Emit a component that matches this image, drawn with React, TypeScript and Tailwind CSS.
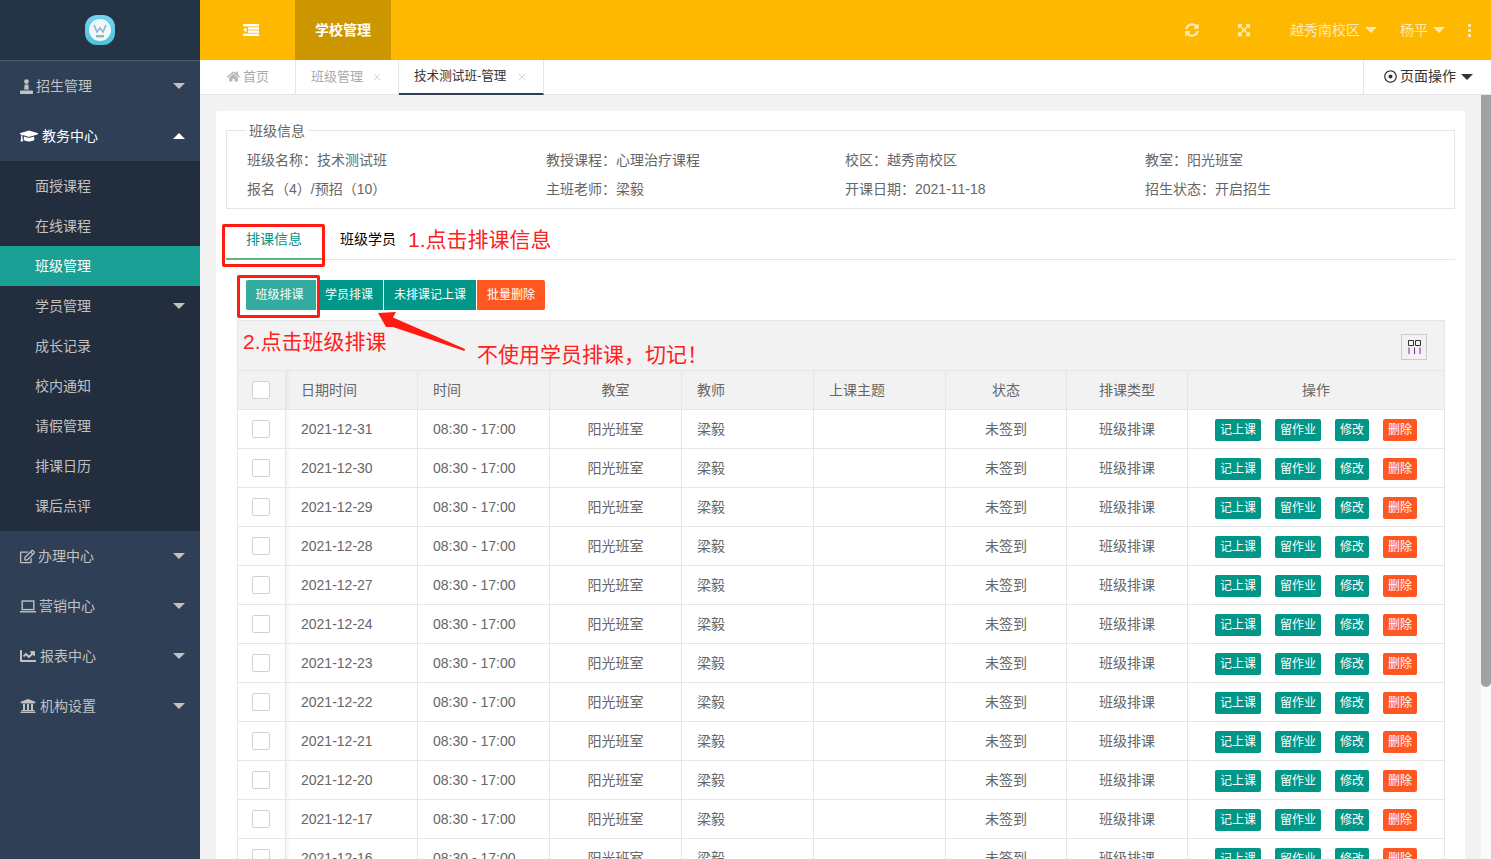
import type { ReactNode } from 'react';
import { X } from 'lucide-react';
import { FaChartLine, FaExpandArrowsAlt, FaGraduationCap, FaHome, FaRegDotCircle, FaRegEdit, FaSyncAlt, FaUniversity } from 'react-icons/fa';

const subMenu = ['面授课程', '在线课程', '班级管理', '学员管理', '成长记录', '校内通知', '请假管理', '排课日历', '课后点评'];

const dates = [
  '2021-12-31', '2021-12-30', '2021-12-29', '2021-12-28', '2021-12-27', '2021-12-24',
  '2021-12-23', '2021-12-22', '2021-12-21', '2021-12-20', '2021-12-17', '2021-12-16',
];

// full-width punctuation, as on the original page
const infoRows = [
  ['班级名称\uFF1A技术测试班', '教授课程\uFF1A心理治疗课程', '校区\uFF1A越秀南校区', '教室\uFF1A阳光班室'],
  ['报名\uFF084\uFF09/预招\uFF0810\uFF09', '主班老师\uFF1A梁毅', '开课日期\uFF1A2021-11-18', '招生状态\uFF1A开启招生'],
];

function Caret({ up, className }: { up?: boolean; className: string }) {
  return (
    <span
      className={`h-0 w-0 border-x-[6px] border-x-transparent ${up ? 'border-b-[6px]' : 'border-t-[6px]'} ${className}`}
    />
  );
}

function MenuItem({ icon, iconWidth, label, open }: { icon: ReactNode; iconWidth: string; label: string; open?: boolean }) {
  return (
    <div className={`flex h-[50px] items-center pl-[20px] pr-[15px] text-[14px] ${open ? 'text-white' : 'text-[#c2c2c2]'}`}>
      <span className={`flex items-center ${iconWidth}`}>{icon}</span>
      <span>{label}</span>
      <Caret up={open} className={`ml-auto ${open ? 'border-b-white' : 'border-t-[#c2c2c2]'}`} />
    </div>
  );
}

function Logo() {
  return (
    <svg width="30" height="30" viewBox="0 0 30 30">
      <defs>
        <linearGradient id="logoFill" x1="0" y1="0" x2="0" y2="1">
          <stop offset="0" stopColor="#74d2f0" />
          <stop offset="1" stopColor="#4cc4d6" />
        </linearGradient>
      </defs>
      <rect width="30" height="30" rx="12" fill="url(#logoFill)" />
      <circle cx="15" cy="15" r="11" fill="#eef7fa" />
      <path d="M9 10l3 7 3-4 3 4 3-7" fill="none" stroke="#8fb3c9" strokeWidth="1.6" />
      <rect x="11" y="20" width="8" height="2.4" fill="#a3afb8" />
    </svg>
  );
}

function StampIcon() {
  return (
    <svg width="13" height="15" viewBox="0 0 13 15" fill="currentColor">
      <circle cx="6.5" cy="2.6" r="2.4" />
      <path d="M4.6 5.4h3.8l.4 5H4.2z" />
      <path d="M1 11.4h11c.6 0 1 .5 1 1.1v1.4c0 .6-.4 1.1-1 1.1H1c-.6 0-1-.5-1-1.1v-1.4c0-.6.4-1.1 1-1.1z" />
    </svg>
  );
}

function LaptopIcon() {
  return (
    <svg width="16" height="13" viewBox="0 0 16 13" fill="none" stroke="currentColor" strokeWidth="1.4">
      <rect x="2.2" y="1" width="11.6" height="8.6" />
      <path d="M0 11.8h16" />
    </svg>
  );
}

function PageTab({ label, width, active, first }: { label: string; width: string; active?: boolean; first?: boolean }) {
  return (
    <div
      className={`flex h-[35px] items-center border-r border-[#e6e6e6] ${width} ${first ? 'pl-[27px]' : 'pl-[15px]'} ${active ? 'border-b-2 border-b-[#2f4056] text-[12.6px] text-[#333]' : 'pb-[2px] text-[13px] text-[#aaa]'}`}
    >
      {first && <FaHome className="mr-[3px] text-[13px] text-[#b5b5b5]" />}
      <span>{label}</span>
      {!first && <X size={12} strokeWidth={1.3} className={`text-[#bbb] ${active ? 'ml-[10px]' : 'ml-[8px]'}`} />}
    </div>
  );
}

function OpButton({ label, danger, wide }: { label: string; danger?: boolean; wide?: boolean }) {
  return (
    <span
      className={`flex h-[22px] items-center justify-center rounded-[2px] text-[12px] text-white ${wide ? 'w-[46px]' : 'w-[34px]'} ${danger ? 'bg-[#ff5722]' : 'bg-[#009688]'}`}
    >
      {label}
    </span>
  );
}

function CheckBox() {
  return <span className="block h-[18px] w-[18px] rounded-[2px] border border-[#d2d2d2] bg-white" />;
}

const cell = 'border border-[#e6e6e6] px-[15px] font-normal';
const checkCell = 'border border-[#e6e6e6] pl-[14px] font-normal';
const shadedCell = 'shadow-[inset_4px_0_4px_-3px_rgba(0,0,0,0.07)]';

export default function App() {
  return (
    <div className="relative flex h-screen overflow-hidden bg-[#f2f2f2] font-['Liberation_Sans','Noto_Sans_CJK_SC',sans-serif] text-[14px] text-[#666]">
      {/* Sidebar */}
      <aside className="w-[200px] shrink-0 bg-[#2f3f55]">
        <div className="flex h-[61px] items-center justify-center border-b border-[#4a5868] bg-[#243346] pb-[1px]">
          <Logo />
        </div>
        <MenuItem icon={<StampIcon />} iconWidth="w-[16px]" label="招生管理" />
        <MenuItem icon={<FaGraduationCap className="text-[18px]" />} iconWidth="w-[22px]" label="教务中心" open />
        <div className="bg-[#222d3d] py-[5px]">
          {subMenu.map((name) => (
            <div
              key={name}
              className={`flex h-[40px] items-center pl-[35px] pr-[15px] ${name === '班级管理' ? 'bg-[#1aa094] text-white' : 'text-[#c2c2c2]'}`}
            >
              {name}
              {name === '学员管理' && <Caret className="ml-auto border-t-[#c2c2c2]" />}
            </div>
          ))}
        </div>
        <MenuItem icon={<FaRegEdit className="text-[15px]" />} iconWidth="w-[18px]" label="办理中心" />
        <MenuItem icon={<LaptopIcon />} iconWidth="w-[19px]" label="营销中心" />
        <MenuItem icon={<FaChartLine className="text-[16px]" />} iconWidth="w-[20px]" label="报表中心" />
        <MenuItem icon={<FaUniversity className="text-[16px]" />} iconWidth="w-[20px]" label="机构设置" />
      </aside>

      <div className="flex min-w-0 flex-1 flex-col">
        {/* Top bar */}
        <header className="flex h-[60px] shrink-0 items-center bg-[#ffb800] text-[#ffe9b3]">
          <div className="flex w-[95px] justify-center pl-[7px]">
            <svg width="16" height="12" viewBox="0 0 16 12" fill="#fff">
              <rect x="0" y="0" width="16" height="2.4" />
              <rect x="5" y="3.2" width="11" height="2.4" />
              <rect x="5" y="6.4" width="11" height="2.4" />
              <rect x="0" y="9.6" width="16" height="2.4" />
              <path d="M0 6l3.5-2.6v5.2z" />
            </svg>
          </div>
          <div className="flex h-full w-[96px] items-center justify-center bg-[#cc9600] font-bold text-white">学校管理</div>
          <div className="ml-auto flex items-center pr-[20px]">
            <FaSyncAlt className="mr-[38px] text-[14px]" />
            <FaExpandArrowsAlt className="mr-[39px] text-[14px]" />
            <span>越秀南校区</span>
            <Caret className="ml-[5px] mr-[23px] border-t-[#ffe9b3]" />
            <span>杨平</span>
            <Caret className="ml-[5px] mr-[23px] border-t-[#ffe9b3]" />
            <span className="flex flex-col gap-[2px]">
              <i className="h-[3px] w-[3px] bg-[#ffe9b3]" />
              <i className="h-[3px] w-[3px] bg-[#ffe9b3]" />
              <i className="h-[3px] w-[3px] bg-[#ffe9b3]" />
            </span>
          </div>
        </header>

        {/* Page tabs */}
        <div className="flex h-[35px] shrink-0 border-b border-[#e6e6e6] bg-white">
          <PageTab first width="w-[96px]" label="首页" />
          <PageTab width="w-[103px]" label="班级管理" />
          <PageTab active width="w-[145px]" label="技术测试班-管理" />
          <div className="ml-auto flex h-full w-[128px] items-center border-l border-[#e6e6e6] pb-[1px] pl-[20px] text-[#333]">
            <FaRegDotCircle className="mr-[3px] text-[13px]" />
            <span>页面操作</span>
            <Caret className="ml-[5px] border-t-[#333]" />
          </div>
        </div>

        <div className="flex min-h-0 flex-1">
          <main className="min-w-0 flex-1 overflow-hidden px-[16px] pt-[16px]">
            <div className="rounded-[2px] bg-white px-[10px] pt-[10px] pb-[20px]">
              <fieldset className="border border-[#e6e6e6] pb-[4px]">
                <legend className="ml-[19px] px-[3px] leading-[19px]">
                  <span className="relative top-[1px]">班级信息</span>
                </legend>
                <div className="pt-[6px]">
                  {infoRows.map((row) => (
                    <div key={row[0]} className="grid h-[29px] grid-cols-[299px_299px_300px_1fr] items-center pl-[20px]">
                      {row.map((text) => (
                        <span key={text}>{text}</span>
                      ))}
                    </div>
                  ))}
                </div>
              </fieldset>

              <div className="mt-[10px] flex h-[41px] border-b border-[#e6e6e6]">
                <div className="flex h-[41px] w-[96px] items-center justify-center border-b-2 border-[#5fb878] pt-[1px] text-[#009688]">排课信息</div>
                <div className="flex h-[40px] items-center px-[18px] text-black">班级学员</div>
              </div>

              <div className="ml-[20px] mt-[20px] flex h-[30px] text-[12px] text-white">
                <button className="w-[70px] rounded-l-[2px] bg-[#33ab9f] pr-[3px]">班级排课</button>
                <button className="ml-[1px] w-[66px] bg-[#009688] pr-[2px]">学员排课</button>
                <button className="ml-[1px] w-[92px] bg-[#009688]">未排课记上课</button>
                <button className="ml-[1px] w-[68px] rounded-r-[2px] bg-[#ff5722]">批量删除</button>
              </div>

              <div className="ml-[11px] mt-[10px] w-[1208px]">
                <div className="flex h-[50px] items-start justify-end border-x border-t border-[#e6e6e6] bg-[#f2f2f2] pr-[17px] pt-[13px]">
                  <span className="flex h-[26px] w-[26px] items-center justify-center border border-[#ccc]">
                    <svg width="13" height="14" viewBox="0 0 13 14" fill="none" strokeWidth="1">
                      <path d="M.5.5h5v5h-5zM7.5.5h5v5h-5z" stroke="#333" />
                      <path d="M1 7.5V14M6.5 7.5V14M12 7.5V14" stroke="#7a2a8c" />
                    </svg>
                  </span>
                </div>
                <table className="w-full table-fixed border-collapse">
                  <colgroup>
                    <col className="w-[48px]" />
                    <col className="w-[132px]" />
                    <col className="w-[132px]" />
                    <col className="w-[132px]" />
                    <col className="w-[132px]" />
                    <col className="w-[132px]" />
                    <col className="w-[121px]" />
                    <col className="w-[121px]" />
                    <col />
                  </colgroup>
                  <thead>
                    <tr className="h-[39px] bg-[#f2f2f2]">
                      <th className={checkCell}><CheckBox /></th>
                      <th className={`${cell} ${shadedCell} text-left`}>日期时间</th>
                      <th className={`${cell} text-left`}>时间</th>
                      <th className={cell}>教室</th>
                      <th className={`${cell} text-left`}>教师</th>
                      <th className={`${cell} text-left`}>上课主题</th>
                      <th className={cell}>状态</th>
                      <th className={cell}>排课类型</th>
                      <th className={cell}>操作</th>
                    </tr>
                  </thead>
                  <tbody>
                    {dates.map((date) => (
                      <tr key={date} className="h-[39px]">
                        <td className={checkCell}><CheckBox /></td>
                        <td className={`${cell} ${shadedCell}`}>{date}</td>
                        <td className={cell}>08:30 - 17:00</td>
                        <td className={`${cell} text-center`}>阳光班室</td>
                        <td className={cell}>梁毅</td>
                        <td className={cell} />
                        <td className={`${cell} text-center`}>未签到</td>
                        <td className={`${cell} text-center`}>班级排课</td>
                        <td className={cell}>
                          <div className="flex justify-center gap-[14px] pt-[1px]">
                            <OpButton wide label="记上课" />
                            <OpButton wide label="留作业" />
                            <OpButton label="修改" />
                            <OpButton danger label="删除" />
                          </div>
                        </td>
                      </tr>
                    ))}
                  </tbody>
                </table>
              </div>
            </div>
          </main>

          {/* Scrollbar */}
          <div className="w-[10px] shrink-0 bg-[#fafafa]">
            <div className="h-[592px] rounded-b-[5px] bg-[#a0a0a5]" />
          </div>
        </div>
      </div>

      {/* Red tutorial marks drawn over the page */}
      <div className="absolute left-[222px] top-[224px] h-[43px] w-[103px] rounded-[2px] border-[3px] border-[#ff1a12]" />
      <div className="absolute left-[237px] top-[275px] h-[43px] w-[83px] rounded-[2px] border-[3px] border-[#ff1a12]" />
      <span className="absolute left-[408px] top-[225px] text-[21px] leading-[30px] text-[#ff2020]">1.点击排课信息</span>
      <span className="absolute left-[243px] top-[327px] text-[21px] leading-[30px] text-[#ff2020]">2.点击班级排课</span>
      <span className="absolute left-[477px] top-[340px] text-[21px] leading-[30px] text-[#ff2020]">{'不使用学员排课\uFF0C切记\uFF01'}</span>
      <svg className="absolute left-[375px] top-[308px]" width="95" height="48" viewBox="0 0 95 48">
        <path d="M3 5L21 4 18 9.5 90 41 89.5 43 18 19 11 19z" fill="#ff1a12" />
      </svg>
    </div>
  );
}
